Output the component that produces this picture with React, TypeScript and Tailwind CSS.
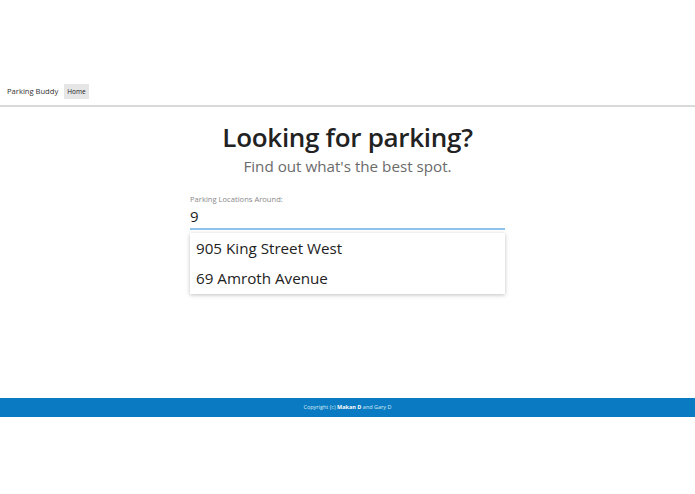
export default function App() {
  const font = { fontFamily: '"Open Sans", "Liberation Sans", sans-serif' };
  return (
    <div className="min-h-[494px] w-full bg-white text-[#222]" style={font}>
      <div className="h-[78px]" />
      <nav className="flex h-[29px] items-center gap-[6px] border-b-2 border-[#d9d9d9] px-[7px]">
        <span className="text-[7.6px] text-[#333]">Parking Buddy</span>
        <span className="bg-[#e6e6e6] px-[3px] py-[4px] text-[6.5px] leading-[7px] text-[#222]">Home</span>
      </nav>
      <main className="flex flex-col items-center pt-[15px]">
        <h1 className="text-[26px] leading-[31px] font-semibold tracking-[-0.3px] text-[#222]">
          Looking for parking?
        </h1>
        <p className="mt-[4px] text-[15.2px] leading-[18px] text-[#6b6b6b]">Find out what's the best spot.</p>
        <div className="mt-[18px] w-[315px]">
          <label className="block text-[7.6px] leading-[12px] text-[#888]">Parking Locations Around:</label>
          <div className="border-b-2 border-[#8ec3ec] pt-[2px] pb-[3px] text-[15px] leading-[18px] text-[#222]">
            9
          </div>
          <ul className="mt-[3px] bg-white pb-[1px] shadow-[0_1px_4px_rgba(0,0,0,0.25)]">
            <li className="px-[6px] py-[5px] text-[15.2px] leading-[20px]">905 King Street West</li>
            <li className="px-[6px] py-[5px] text-[15.2px] leading-[20px]">69 Amroth Avenue</li>
          </ul>
        </div>
      </main>
      <div className="h-[104px]" />
      <footer className="flex h-[19px] items-center justify-center bg-[#0a7bc2] text-[5.5px] text-[#d6ebf7]">
        Copyright (c)&nbsp;<b className="font-bold text-white">Makan D</b>&nbsp;and Gary D
      </footer>
    </div>
  );
}
